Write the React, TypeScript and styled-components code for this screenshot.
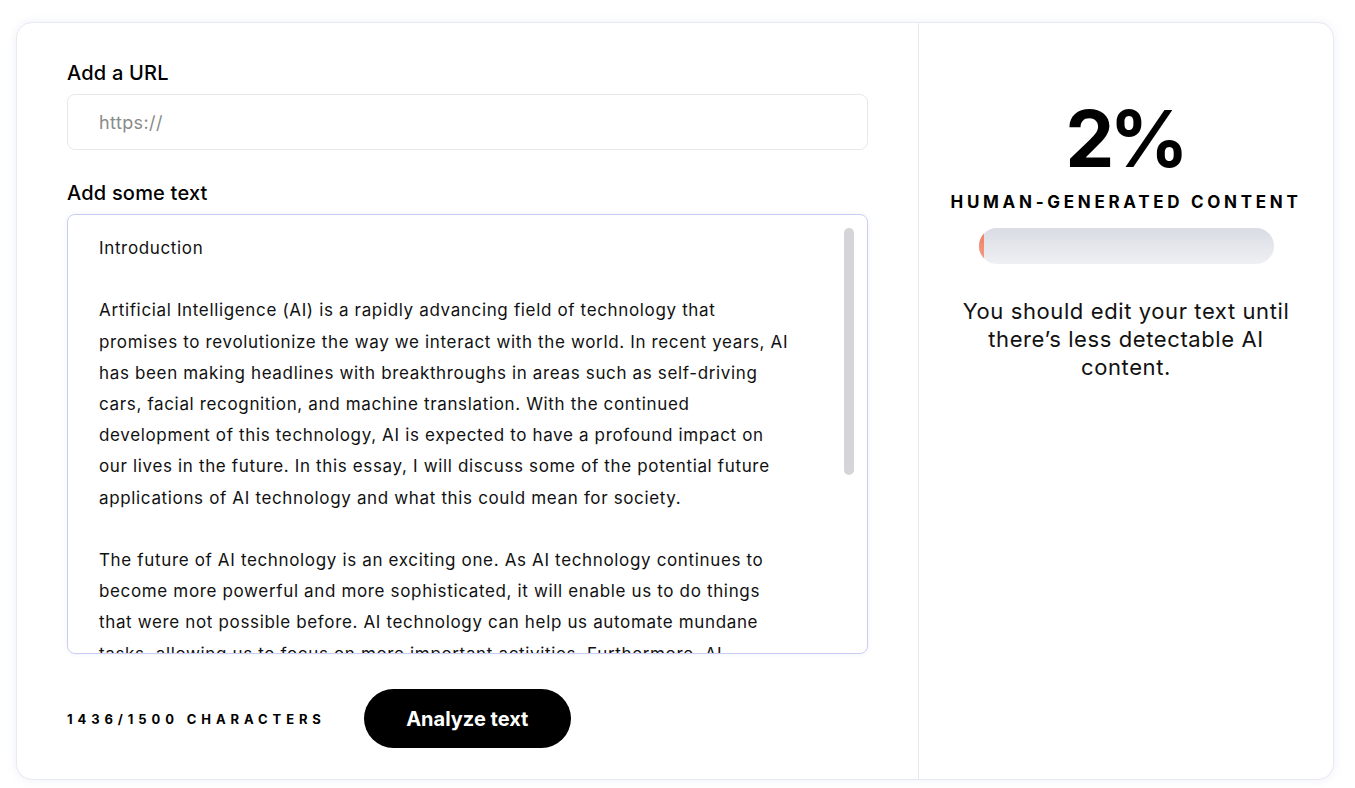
import React from 'react';
import styled, { createGlobalStyle } from 'styled-components';

const GlobalStyle = createGlobalStyle`
  html, body { margin: 0; padding: 0; background: #fff; }
  body { font-family: Inter, "Noto Sans", sans-serif; color: #000; }
  * { box-sizing: border-box; }
`;

const Page = styled.div`
  padding: 22px 21px 8px 16px;
`;

const Card = styled.div`
  display: grid;
  grid-template-columns: 902px 1fr;
  height: 758px;
  border: 1px solid #e9e9f2;
  border-radius: 16px;
  background: #fff;
  box-shadow: 0 0 10px rgba(210, 212, 235, 0.35);
  overflow: hidden;
`;

const Editor = styled.section`
  display: flex;
  flex-direction: column;
  padding: 36px 50px 0 50px;
  border-right: 1px solid #e8e8ee;
`;

const FieldLabel = styled.label`
  display: block;
  font-size: 20px;
  font-weight: 500;
  line-height: 28px;
  letter-spacing: 0.2px;
  color: #000;
  margin-bottom: 7px;
`;

const UrlInput = styled.input`
  height: 56px;
  width: 100%;
  border: 1px solid #e7e7ec;
  border-radius: 8px;
  padding: 0 31px;
  font-family: inherit;
  font-size: 18px;
  letter-spacing: 0.4px;
  color: #222;
  outline: none;
  margin-bottom: 29px;
  &::placeholder { color: #8a8a8a; }
`;

const TextBox = styled.div`
  position: relative;
  height: 440px;
  border: 1px solid #c9cdf2;
  border-radius: 8px;
  overflow: hidden;
  box-shadow: 0 0 5px rgba(140, 150, 230, 0.12);
`;

const Scroller = styled.div`
  height: 100%;
  overflow-y: scroll;
  scrollbar-width: none;
  padding: 18px 0 0 31px;
  font-size: 17px;
  letter-spacing: 0.65px;
  line-height: 31.2px;
  color: #111;
`;

const ScrollThumb = styled.div`
  position: absolute;
  top: 13px;
  right: 13px;
  width: 10px;
  height: 247px;
  border-radius: 5px;
  background: #d4d4d9;
`;

const Line = styled.div`
  white-space: pre;
  min-height: 31.2px;
`;

const Footer = styled.div`
  display: flex;
  align-items: center;
  gap: 38px;
  margin-top: 35px;
`;

const Counter = styled.span`
  font-size: 13px;
  font-weight: 700;
  letter-spacing: 4.9px;
  color: #000;
`;

const AnalyzeButton = styled.button`
  width: 207px;
  height: 59px;
  border: none;
  border-radius: 30px;
  background: #000;
  color: #fff;
  font-family: inherit;
  font-size: 20px;
  font-weight: 700;
  cursor: pointer;
`;

const Result = styled.section`
  display: flex;
  flex-direction: column;
  align-items: center;
  padding-top: 77px;
  text-align: center;
`;

const Score = styled.div`
  font-size: 78px;
  font-weight: 700;
  line-height: 78px;
  letter-spacing: -5px;
  text-indent: -3px;
`;

const ScoreLabel = styled.div`
  margin-top: 13px;
  font-size: 17px;
  font-weight: 700;
  letter-spacing: 3.7px;
  line-height: 22px;
`;

const Bar = styled.div`
  margin-top: 15px;
  width: 295px;
  height: 36px;
  border-radius: 18px;
  overflow: hidden;
  background: linear-gradient(180deg, #d9dce4 0%, #eff0f3 100%);
`;

const Fill = styled.div`
  height: 100%;
  background: linear-gradient(180deg, #f0795c 0%, #f7a08a 100%);
`;

const Message = styled.p`
  margin: 33px 0 0;
  font-size: 22px;
  letter-spacing: 0.6px;
  line-height: 28px;
  color: #111;
`;

const lines = [
  'Introduction',
  '',
  'Artificial Intelligence (AI) is a rapidly advancing field of technology that',
  'promises to revolutionize the way we interact with the world. In recent years, AI',
  'has been making headlines with breakthroughs in areas such as self-driving',
  'cars, facial recognition, and machine translation. With the continued',
  'development of this technology, AI is expected to have a profound impact on',
  'our lives in the future. In this essay, I will discuss some of the potential future',
  'applications of AI technology and what this could mean for society.',
  '',
  'The future of AI technology is an exciting one. As AI technology continues to',
  'become more powerful and more sophisticated, it will enable us to do things',
  'that were not possible before. AI technology can help us automate mundane',
  'tasks, allowing us to focus on more important activities. Furthermore, AI',
  'can be used to improve healthcare, education, and transportation, making',
  'these services more efficient and accessible to everyone.',
  '',
  'However, there are also risks associated with the rapid growth of AI. As',
  'machines become more capable, there are concerns about job displacement,',
  'privacy, and the ethical use of these powerful new tools.',
  '',
  'In conclusion, the future of AI is full of promise and challenges.',
];

export default function App() {
  const score = 2;
  return (
    <>
      <GlobalStyle />
      <Page>
        <Card>
          <Editor>
            <FieldLabel htmlFor="url">Add a URL</FieldLabel>
            <UrlInput id="url" placeholder="https://" />
            <FieldLabel>Add some text</FieldLabel>
            <TextBox>
              <Scroller>
                {lines.map((l, i) => (
                  <Line key={i}>{l}</Line>
                ))}
              </Scroller>
              <ScrollThumb />
            </TextBox>
            <Footer>
              <Counter>1436/1500 CHARACTERS</Counter>
              <AnalyzeButton>Analyze text</AnalyzeButton>
            </Footer>
          </Editor>
          <Result>
            <Score>{score}%</Score>
            <ScoreLabel>HUMAN-GENERATED CONTENT</ScoreLabel>
            <Bar>
              <Fill style={{ width: `${score}%` }} />
            </Bar>
            <Message>
              You should edit your text until
              <br />
              there’s less detectable AI
              <br />
              content.
            </Message>
          </Result>
        </Card>
      </Page>
    </>
  );
}
